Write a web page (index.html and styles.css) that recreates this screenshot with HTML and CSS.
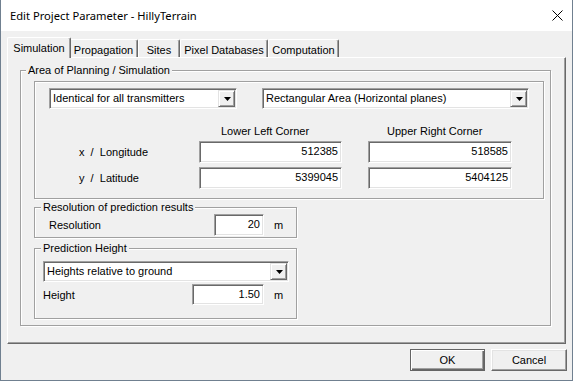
FILE: index.html
```html
<!doctype html>
<html>
  <head>
    <meta charset="utf-8">
    <title>Edit Project Parameter - HillyTerrain</title>
    <link rel="stylesheet" href="styles.css">
  </head>
  <body>
    <div class="window">
      <div class="titlebar">
        <span class="title">Edit Project Parameter - HillyTerrain</span>
        <svg class="close" width="11" height="11" viewBox="0 0 11 11">
          <path d="M0.5 0.5 L10.5 10.5 M10.5 0.5 L0.5 10.5" stroke="#000" stroke-width="1" fill="none"/>
        </svg>
      </div>

      <div class="client">
        <div class="tabs">
          <div class="tab active">Simulation</div>
          <div class="tab t-prop">Propagation</div>
          <div class="tab t-sites">Sites</div>
          <div class="tab t-pixel">Pixel Databases</div>
          <div class="tab t-comp">Computation</div>
        </div>

        <div class="panel">
          <div class="group area">
            <div class="group-title">Area of Planning / Simulation</div>

            <div class="box">
              <div class="combo-row">
                <div class="combo c-mode">
                  <span class="combo-text">Identical for all transmitters</span>
                  <span class="combo-btn"><svg width="7" height="4"><polygon points="0,0 7,0 3.5,4" fill="#000"/></svg></span>
                </div>
                <div class="combo c-area">
                  <span class="combo-text">Rectangular Area (Horizontal planes)</span>
                  <span class="combo-btn"><svg width="7" height="4"><polygon points="0,0 7,0 3.5,4" fill="#000"/></svg></span>
                </div>
              </div>

              <div class="coords">
                <div class="head"></div>
                <div class="head h-left">Lower Left Corner</div>
                <div class="head h-right">Upper Right Corner</div>

                <div class="row-label">x  /  Longitude</div>
                <div class="edit">512385</div>
                <div class="edit">518585</div>

                <div class="row-label">y  /  Latitude</div>
                <div class="edit">5399045</div>
                <div class="edit">5404125</div>
              </div>
            </div>

            <div class="group sub res">
              <div class="group-title">Resolution of prediction results</div>
              <div class="field-row">
                <span class="field-label res-label">Resolution</span>
                <div class="edit res-edit">20</div>
                <span class="unit">m</span>
              </div>
            </div>

            <div class="group sub pred">
              <div class="group-title">Prediction Height</div>
              <div class="combo c-height">
                <span class="combo-text">Heights relative to ground</span>
                <span class="combo-btn"><svg width="7" height="4"><polygon points="0,0 7,0 3.5,4" fill="#000"/></svg></span>
              </div>
              <div class="field-row height-row">
                <span class="field-label height-label">Height</span>
                <div class="edit height-edit">1.50</div>
                <span class="unit">m</span>
              </div>
            </div>
          </div>
        </div>

        <div class="buttons">
          <div class="btn default">OK</div>
          <div class="btn cancel">Cancel</div>
        </div>
      </div>
    </div>
  </body>
</html>
```

FILE: styles.css
```css
* {
  box-sizing: border-box;
}
body {
  margin: 0;
  font-family: "Liberation Sans", Arial, sans-serif;
  font-size: 11px;
  color: #000;
}

.window {
  width: 573px;
  height: 381px;
  border: 1px solid #708090;
  border-top: none;
  display: flex;
  flex-direction: column;
  background: #f0f0f0;
}

/* title bar */
.titlebar {
  height: 31px;
  flex: none;
  background: #fff;
  display: flex;
  align-items: center;
  justify-content: space-between;
  padding: 0 9px 1px 8px;
}
.title {
  font-family: "Noto Sans", "Open Sans", sans-serif;
  font-size: 11.2px;
  padding-left: 1px;
}
.close {
  display: block;
}

.client {
  flex: 1;
  padding: 6px 6px 9px;
  display: flex;
  flex-direction: column;
}

/* tabs */
.tabs {
  display: flex;
  align-items: flex-end;
  height: 20px;
}
.tab {
  height: 18px;
  padding-top: 4px;
  line-height: 13px;
  text-align: center;
  border: 1px solid;
  border-color: #fff #696969 transparent #fff;
  border-bottom: none;
  box-shadow: inset -1px 0 0 #a0a0a0;
  border-radius: 2px 2px 0 0;
  white-space: nowrap;
}
.tab.active {
  width: 64px;
  height: 21px;
  margin-bottom: -1px;
  margin-right: -2px;
  position: relative;
  z-index: 1;
  background: #f0f0f0;
}
.t-prop { width: 69px; }
.t-sites { width: 42px; }
.t-pixel { width: 88px; }
.t-comp { width: 71px; }

.panel {
  height: 287px;
  flex: none;
  border: 1px solid;
  border-color: #fff #696969 #696969 #fff;
  box-shadow: inset -1px -1px 0 #a0a0a0;
  padding: 12px 14px 17px 12px;
}

/* group boxes */
.group {
  border: 1px solid #a0a0a0;
  box-shadow: inset 1px 1px 0 #fff, 1px 1px 0 #fff;
}
.group-title {
  width: fit-content;
  margin: -7px 0 0 6px;
  padding: 0 2px;
  background: #f0f0f0;
  line-height: 13px;
  white-space: nowrap;
}
.area {
  height: 256px;
}
.area > .group-title {
  margin-left: 5px;
}

.box {
  margin: 4px 6px 0 13px;
  padding: 6px 14px 9px;
  border: 1px solid #a0a0a0;
  box-shadow: inset 1px 1px 0 #fff, 1px 1px 0 #fff;
}

.combo-row {
  display: flex;
  gap: 25px;
}

/* combo box */
.combo {
  height: 21px;
  display: flex;
  background: #fff;
  border: 1px solid;
  border-color: #a0a0a0 #fff #fff #a0a0a0;
  box-shadow: inset 1px 1px 0 #696969, inset -1px -1px 0 #e3e3e3;
  padding: 1px;
}
.combo-text {
  flex: 1;
  line-height: 17px;
  padding-left: 2px;
  white-space: nowrap;
  overflow: hidden;
}
.combo-btn {
  width: 17px;
  height: 17px;
  background: #f0f0f0;
  border: 1px solid;
  border-color: #e3e3e3 #696969 #696969 #e3e3e3;
  box-shadow: inset 1px 1px 0 #fff, inset -1px -1px 0 #a0a0a0;
  display: flex;
  align-items: center;
  justify-content: center;
}
.combo-btn svg {
  display: block;
  margin-left: 1px;
}
.c-mode { width: 188px; }
.c-area { width: 267px; }

/* coordinates */
.coords {
  margin-top: 16px;
  display: grid;
  grid-template-columns: 124px 143px 144px;
  column-gap: 26px;
  row-gap: 4px;
}
.head {
  line-height: 13px;
  margin-bottom: -1px;
  white-space: nowrap;
}
.h-left { padding-left: 22px; }
.h-right { padding-left: 19px; }
.row-label {
  line-height: 22px;
  padding-left: 30px;
  white-space: pre;
}

.edit {
  height: 22px;
  background: #fff;
  border: 1px solid;
  border-color: #a0a0a0 #fff #fff #a0a0a0;
  box-shadow: inset 1px 1px 0 #696969, inset -1px -1px 0 #e3e3e3;
  text-align: right;
  line-height: 19px;
  padding-right: 3px;
}

/* lower groups */
.sub {
  width: 263px;
  margin-left: 13px;
}
.res {
  margin-top: 8px;
  padding-bottom: 1px;
}
.pred {
  margin-top: 10px;
  padding-bottom: 13px;
}
.field-row {
  display: flex;
  align-items: center;
  height: 22px;
}
.field-label {
  flex: none;
}
.res-label {
  width: 179px;
  padding-left: 14px;
}
.res-edit {
  width: 50px;
}
.unit {
  margin-left: 10px;
}
.c-height {
  margin: 6px 7px 0 8px;
}
.height-row {
  height: 21px;
  margin-top: 2px;
}
.height-label {
  width: 157px;
  padding-left: 8px;
}
.height-edit {
  width: 72px;
  height: 21px;
  line-height: 18px;
}

/* bottom buttons */
.buttons {
  margin-top: 5px;
  display: flex;
  justify-content: flex-end;
  gap: 6px;
  margin-right: -1px;
}
.btn {
  width: 75px;
  height: 22px;
  text-align: center;
  line-height: 20px;
  border: 1px solid;
  border-color: #fff #696969 #696969 #fff;
  box-shadow: inset -1px -1px 0 #a0a0a0, inset 1px 1px 0 #e3e3e3;
}
.btn.default {
  border-color: #646464;
  box-shadow: inset 1px 1px 0 #fff, inset -1px -1px 0 #696969, inset -2px -2px 0 #a0a0a0;
}
.btn.cancel {
  width: 76px;
}
```
